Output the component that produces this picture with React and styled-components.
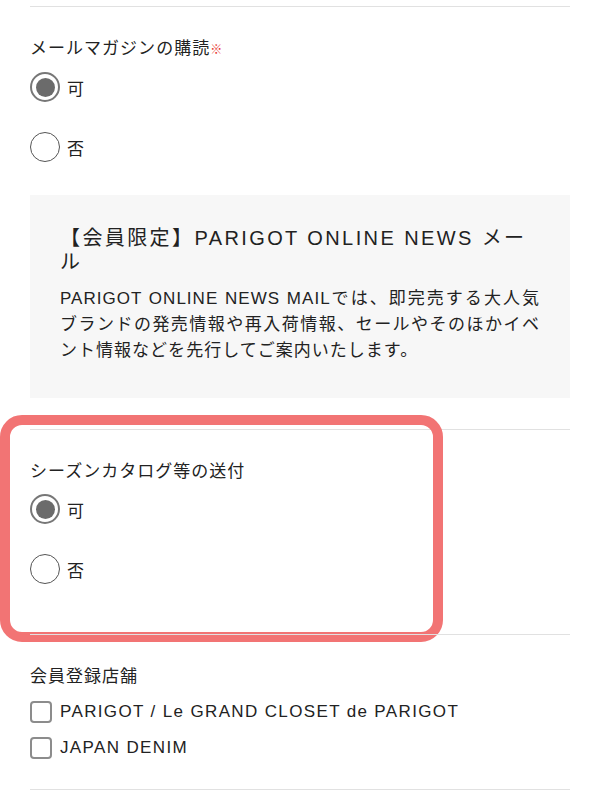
import styled, { createGlobalStyle } from "styled-components";

const GlobalStyle = createGlobalStyle`
    * {
        box-sizing: border-box;
    }
    body {
        margin: 0;
        background-color: #ffffff;
        font-family: "Liberation Sans", "Noto Sans CJK JP", sans-serif;
        color: #222222;
    }
`

export default function App(){

    return(
    <>
        <GlobalStyle />
        <Page>
            <Section>
                <Heading>メールマガジンの購読<Required>※</Required></Heading>
                <RadioList>
                    <RadioRow>
                        <Radio type="radio" name="mailmag" defaultChecked />
                        <span>可</span>
                    </RadioRow>
                    <RadioRow>
                        <Radio type="radio" name="mailmag" />
                        <span>否</span>
                    </RadioRow>
                </RadioList>
                <NoteBox>
                    <NoteTitle>【会員限定】PARIGOT ONLINE NEWS メール</NoteTitle>
                    <NoteText>PARIGOT ONLINE NEWS MAILでは、即完売する大人気ブランドの発売情報や再入荷情報、セールやそのほかイベント情報などを先行してご案内いたします。</NoteText>
                </NoteBox>
            </Section>

            <Section>
                <Highlight />
                <Heading>シーズンカタログ等の送付</Heading>
                <RadioList>
                    <RadioRow>
                        <Radio type="radio" name="catalog" defaultChecked />
                        <span>可</span>
                    </RadioRow>
                    <RadioRow>
                        <Radio type="radio" name="catalog" />
                        <span>否</span>
                    </RadioRow>
                </RadioList>
            </Section>

            <Section $last>
                <Heading>会員登録店舗</Heading>
                <CheckList>
                    <CheckRow>
                        <Checkbox type="checkbox" />
                        <span>PARIGOT / Le GRAND CLOSET de PARIGOT</span>
                    </CheckRow>
                    <CheckRow>
                        <Checkbox type="checkbox" />
                        <span>JAPAN DENIM</span>
                    </CheckRow>
                </CheckList>
            </Section>
        </Page>
    </>);
}

const Page = styled.div`
    width: 600px;
    padding: 6px 30px 0;
`

const Section = styled.section`
    position: relative;
    border-top: 1px solid #e1e1e1;
    border-bottom: ${props => props.$last ? "1px solid #e1e1e1" : "none"};
    padding: 30px 0 ${props => props.$last ? "30px" : "31px"};
`

// annotation frame drawn over the catalog section
const Highlight = styled.div`
    position: absolute;
    top: -15px;
    left: -30px;
    width: 443px;
    height: 227px;
    border: 10px solid #f27474;
    border-radius: 22px;
    pointer-events: none;
`

const Heading = styled.h3`
    margin: 0 0 10px;
    font-size: 17px;
    font-weight: 400;
    line-height: 24px;
    letter-spacing: 0.06em;
`

const Required = styled.span`
    color: #e8352c;
    font-size: 12px;
    letter-spacing: 0;
`

const RadioList = styled.div`
    display: flex;
    flex-direction: column;
    gap: 30px;
    padding-bottom: 19px;
`

const RadioRow = styled.label`
    display: flex;
    align-items: center;
    gap: 7px;
    height: 30px;
    font-size: 17px;
    letter-spacing: 0.06em;
`

const Radio = styled.input`
    appearance: none;
    margin: 0;
    width: 30px;
    height: 30px;
    border-radius: 50%;
    border: 1.5px solid #555555;
    background-color: #ffffff;
    display: flex;
    align-items: center;
    justify-content: center;

    &:checked{
        border: 2px solid #777777;
    }
    &:checked::after{
        content: "";
        width: 19px;
        height: 19px;
        border-radius: 50%;
        background-color: #6b6b6b;
    }
`

const NoteBox = styled.div`
    margin-top: 14px;
    background-color: #f7f7f7;
    padding: 31px 30px 34px;
`

const NoteTitle = styled.h4`
    margin: 0 0 12px;
    font-size: 20px;
    font-weight: 400;
    line-height: 24px;
    letter-spacing: 0.12em;
`

const NoteText = styled.p`
    margin: 0;
    font-size: 17px;
    line-height: 26px;
    letter-spacing: 0.06em;
    text-align: justify;
`

const CheckList = styled.div`
    display: flex;
    flex-direction: column;
    gap: 14px;
    padding-top: 2px;
`

const CheckRow = styled.label`
    display: flex;
    align-items: center;
    gap: 8px;
    height: 22px;
    font-size: 17px;
    letter-spacing: 0.08em;
`

const Checkbox = styled.input`
    appearance: none;
    margin: 0;
    width: 22px;
    height: 22px;
    border: 2.5px solid #8c8c8c;
    border-radius: 4px;
    background-color: #ffffff;
`
